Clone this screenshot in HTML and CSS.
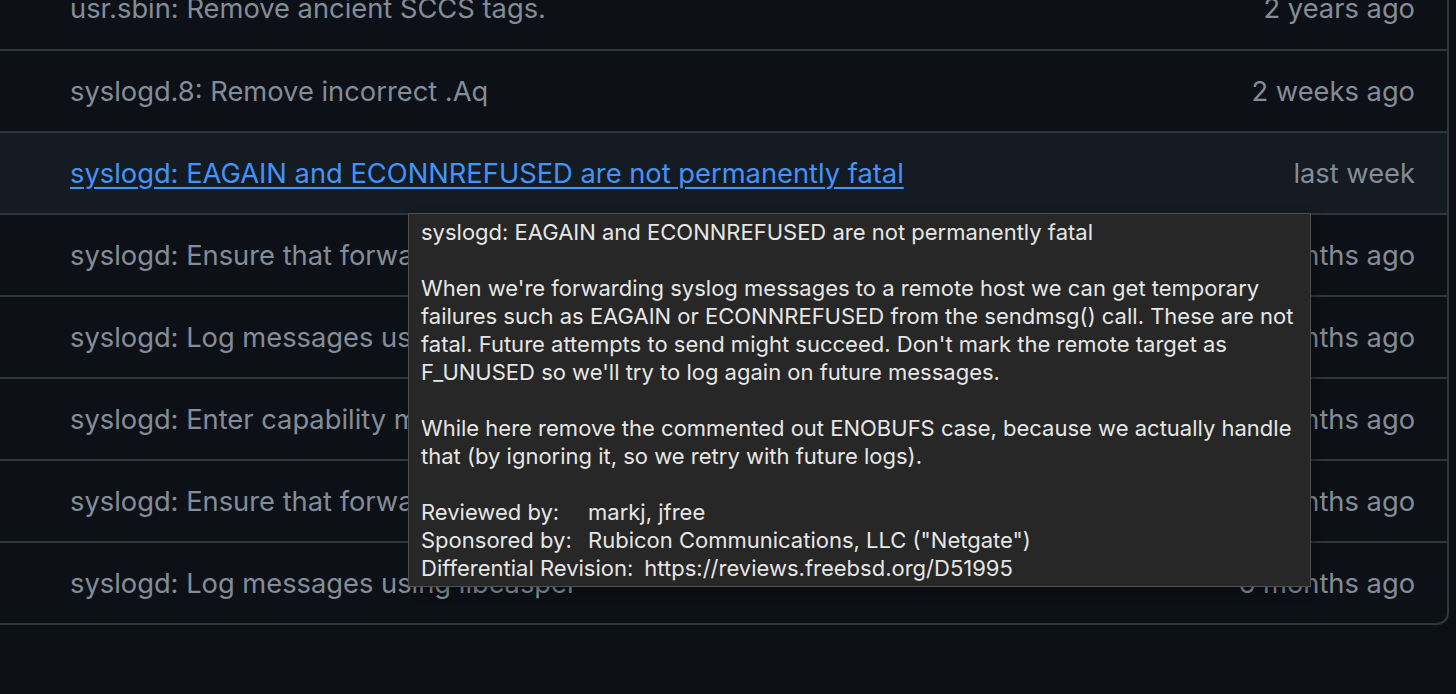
FILE: index.html
```html
<!DOCTYPE html>
<html lang="en">
<head>
    <meta charset="UTF-8">
    <title>usr.sbin/syslogd</title>
    <link rel="stylesheet" href="styles.css">
</head>
<body>
<div class="commits">
    <div class="row">
        <span class="msg">usr.sbin: Remove ancient SCCS tags.</span>
        <span class="age">2 years ago</span>
    </div>
    <div class="row">
        <span class="msg">syslogd.8: Remove incorrect .Aq</span>
        <span class="age">2 weeks ago</span>
    </div>
    <div class="row hover">
        <a class="msg link" href="#">syslogd: EAGAIN and ECONNREFUSED are not permanently fatal</a>
        <span class="age">last week</span>
    </div>
    <div class="row">
        <span class="msg">syslogd: Ensure that forwarding sockets are nonblocking</span>
        <span class="age">6 months ago</span>
    </div>
    <div class="row">
        <span class="msg">syslogd: Log messages using libcasper</span>
        <span class="age">6 months ago</span>
    </div>
    <div class="row">
        <span class="msg">syslogd: Enter capability mode</span>
        <span class="age">6 months ago</span>
    </div>
    <div class="row">
        <span class="msg">syslogd: Ensure that forwarding sockets are nonblocking</span>
        <span class="age">6 months ago</span>
    </div>
    <div class="row">
        <span class="msg">syslogd: Log messages using libcasper</span>
        <span class="age">6 months ago</span>
    </div>
</div>

<div class="tooltip">
    <p>syslogd: EAGAIN and ECONNREFUSED are not permanently fatal</p>
    <p>When we're forwarding syslog messages to a remote host we can get temporary<br>
    failures such as EAGAIN or ECONNREFUSED from the sendmsg() call. These are not<br>
    fatal. Future attempts to send might succeed. Don't mark the remote target as<br>
    F_UNUSED so we'll try to log again on future messages.</p>
    <p>While here remove the commented out ENOBUFS case, because we actually handle<br>
    that (by ignoring it, so we retry with future logs).</p>
    <div class="trailers">
        <div><span class="key">Reviewed by:</span>markj, jfree</div>
        <div><span class="key">Sponsored by:</span>Rubicon Communications, LLC ("Netgate")</div>
        <div><span class="key wide">Differential Revision:</span>https://reviews.freebsd.org/D51995</div>
    </div>
</div>
</body>
</html>
```

FILE: styles.css
```css
body {
    margin: 0;
    background-color: #0d1117;
    font-family: Inter, "Liberation Sans", Arial, sans-serif;
    height: 694px;
    overflow: hidden;
}

.commits {
    width: 1457px;
    margin-left: -12px;
    margin-top: -35px;
    border: 2px solid #30363d;
    border-radius: 12px;
}

.row {
    display: flex;
    justify-content: space-between;
    align-items: center;
    height: 80px;
    padding: 0 32px 0 80px;
    border-top: 2px solid #30363d;
    font-size: 27.3px;
    color: #848d97;
}

.row:first-child {
    border-top: none;
    height: 82px;
}

.row.hover {
    background-color: #151b23;
}

.link {
    color: #4493f8;
    text-decoration: underline;
    text-underline-offset: 4px;
    text-decoration-thickness: 2px;
}

.age {
    white-space: nowrap;
}

.tooltip {
    position: absolute;
    left: 408px;
    top: 213px;
    width: 877px;
    padding: 4px 12px;
    background-color: #272727;
    border: 1px solid #505050;
    box-shadow: 4px 4px 10px rgba(0, 0, 0, 0.35);
    color: #e6e6e6;
    font-size: 22px;
    line-height: 28px;
}

.tooltip p {
    margin: 0 0 28px 0;
}

.key {
    display: inline-block;
    width: 167px;
}

.key.wide {
    width: auto;
    margin-right: 11px;
}
```
